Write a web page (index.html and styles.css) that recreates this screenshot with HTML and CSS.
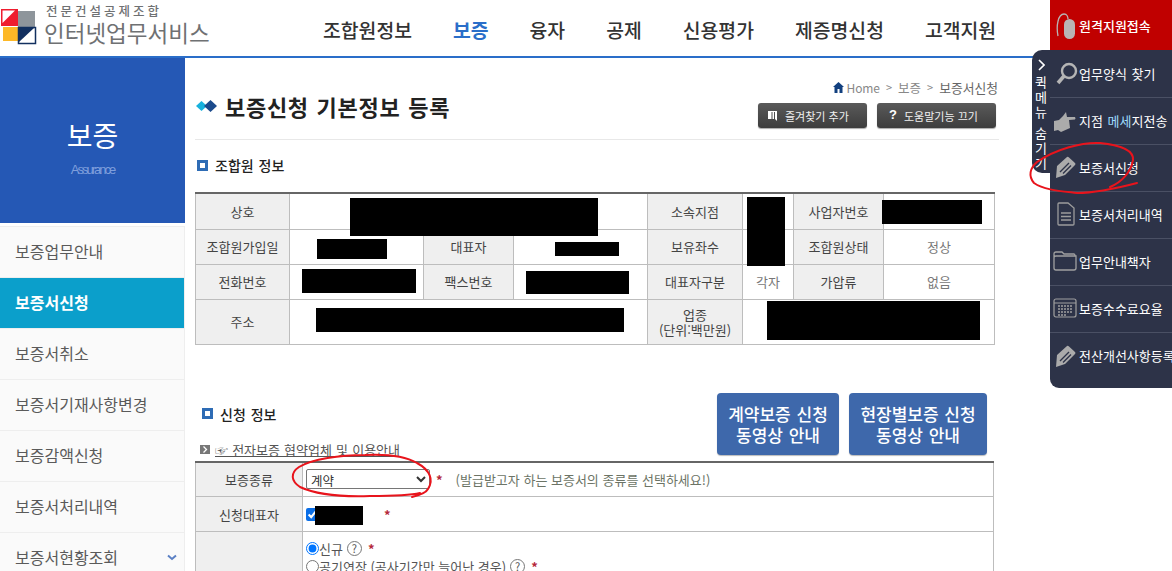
FILE: index.html
```html
<!DOCTYPE html>
<html lang="ko">
<head>
<meta charset="utf-8">
<title>보증신청 기본정보 등록</title>
<link rel="stylesheet" href="styles.css">
</head>
<body>
<div class="page">
  <header class="top">
    <div class="logo">
      <svg class="logo-mark" width="38" height="46" viewBox="0 0 38 46">
        <rect x="18" y="11" width="17" height="16" fill="#8e959b"/>
        <rect x="3" y="27" width="15" height="14" fill="#fdb827"/>
        <rect x="1" y="9" width="17" height="17" fill="#ef1c2e"/>
        <path d="M2.500 10.500 H15 L2.500 23 Z" fill="#fff"/>
        <rect x="18.500" y="27.500" width="17" height="16" fill="#fff" stroke="#12305f" stroke-width="1.500"/>
        <path d="M19 28 H34 L19 42 Z" fill="#12305f"/>
      </svg>
      <div class="logo-text">
        <div class="logo-sub">전문건설공제조합</div>
        <div class="logo-main">인터넷업무서비스</div>
      </div>
    </div>
    <nav class="nav">
      <a>조합원정보</a><a class="on">보증</a><a>융자</a><a>공제</a><a>신용평가</a><a>제증명신청</a><a>고객지원</a>
    </nav>
  </header>

  <div class="body">
    <aside class="side">
      <div class="side-head">
        <div class="side-title">보증</div>
        <div class="side-en">Assurance</div>
      </div>
      <ul class="side-menu">
        <li>보증업무안내</li>
        <li class="active">보증서신청</li>
        <li>보증서취소</li>
        <li>보증서기재사항변경</li>
        <li>보증감액신청</li>
        <li>보증서처리내역</li>
        <li>보증서현황조회<svg class="chev" width="10" height="7" viewBox="0 0 10 7"><path d="M1 1.500 L5 5 L9 1.500" fill="none" stroke="#5b80c4" stroke-width="2"/></svg></li>
      </ul>
    </aside>

    <main class="main">
      <div class="title-row">
        <div class="title">
          <svg width="22" height="12" viewBox="0 0 22 12"><path d="M0 6 L5.500 1 L11 6 L5.500 11 Z" fill="#17b1dd"/><path d="M8 6 L14.500 0 L21 6 L14.500 12 Z" fill="#1b4a8c"/></svg>
          <h1>보증신청 기본정보 등록</h1>
        </div>
        <div class="title-right">
          <div class="crumb">
            <svg width="11" height="11" viewBox="0 0 11 11"><path d="M5.500 0 L11 5 H9.500 V11 H1.500 V5 H0 Z" fill="#12407f"/><rect x="4.500" y="7" width="2" height="4" fill="#fff"/></svg>
            <span class="home">Home</span><i>&gt;</i><span>보증</span><i>&gt;</i><b>보증서신청</b>
          </div>
          <div class="tools">
            <button class="tool tool-a"><svg width="9" height="10" viewBox="0 0 9 10"><path d="M0 0 H9 V10 L7 8 V1 H6 V8 H4.500 V1 H3.500 V8 H0 Z" fill="#fff"/></svg>즐겨찾기 추가</button>
            <button class="tool tool-b"><em>?</em>도움말기능 끄기</button>
          </div>
        </div>
      </div>

      <h2 class="sec"><span class="sq"></span>조합원 정보</h2>

      <table class="info">
        <colgroup><col class="c94"><col class="c134"><col class="c90"><col class="c134"><col class="c95"><col class="c51"><col class="c90"><col class="c111"></colgroup>
        <tr class="r1"><th>상호</th><td colspan="3"></td><th>소속지점</th><td></td><th>사업자번호</th><td></td></tr>
        <tr class="r2"><th>조합원가입일</th><td></td><th>대표자</th><td></td><th>보유좌수</th><td></td><th>조합원상태</th><td>정상</td></tr>
        <tr class="r2"><th>전화번호</th><td></td><th>팩스번호</th><td></td><th>대표자구분</th><td>각자</td><th>가압류</th><td>없음</td></tr>
        <tr class="r4"><th>주소</th><td colspan="3"></td><th>업종<br>(단위:백만원)</th><td colspan="3"></td></tr>
      </table>

      <div class="apply-head">
        <div class="apply-left">
          <h2 class="sec sec2"><span class="sq"></span>신청 정보</h2>
          <div class="guide"><svg width="10" height="9" viewBox="0 0 10 9"><rect width="10" height="9" fill="#777"/><path d="M3.500 1.500 L6.500 4.500 L3.500 7.500" fill="none" stroke="#fff" stroke-width="1.300"/></svg><a>☞ 전자보증 협약업체 및 이용안내</a></div>
        </div>
        <div class="video-btns">
          <button class="vbtn v1">계약보증 신청<br>동영상 안내</button>
          <button class="vbtn v2">현장별보증 신청<br>동영상 안내</button>
        </div>
      </div>

      <table class="form">
        <colgroup><col class="f1"><col></colgroup>
        <tr class="fr"><th>보증종류</th><td><div class="line"><select class="sel"><option>계약</option></select><span class="star s1">*</span><span class="note">(발급받고자 하는 보증서의 종류를 선택하세요!)</span></div></td></tr>
        <tr class="fr"><th>신청대표자</th><td><div class="line"><input type="checkbox" class="chk" checked><span class="star s2">*</span></div></td></tr>
        <tr class="fr3"><th></th><td>
          <label class="radio"><input type="radio" name="k" checked>신규 <span class="q">?</span><span class="star">*</span></label>
          <label class="radio"><input type="radio" name="k">공기연장 (공사기간만 늘어난 경우) <span class="q">?</span><span class="star">*</span></label>
        </td></tr>
      </table>
    </main>
  </div>

  <aside class="quick">
    <div class="remote">
      <svg width="20" height="34" viewBox="0 0 20 34"><path d="M2 28 C0 18 2 6 8 6 C11 6 12 9 12 11" fill="none" stroke="#b9b4b4" stroke-width="1.300"/><rect x="8" y="11" width="11" height="20" rx="5.500" fill="#b9b4b4"/></svg>
      <span>원격지원접속</span>
    </div>
    <div class="panel">
      <button class="tab"><svg width="7" height="12" viewBox="0 0 7 12"><path d="M1 1 L6 6 L1 11" fill="none" stroke="#fff" stroke-width="1.600"/></svg><span>퀵메뉴 숨기기</span></button>
      <a class="qi"><svg width="26" height="28" viewBox="0 0 26 28"><circle cx="16" cy="12" r="7" fill="none" stroke="#b5b5b5" stroke-width="2.400"/><path d="M11 17 L5 24" stroke="#b5b5b5" stroke-width="3.600"/></svg><span>업무양식 찾기</span></a>
      <a class="qi"><svg width="26" height="24" viewBox="0 0 26 24"><path d="M1 13 L6 12 L10 8 L13 4 L14 9 L22 9 Q23 10.500 22 11.500 L16 12 L17 20 L8 24 L5 22 L1 23 Z" fill="#ababab"/></svg><span>지점 <u>메세</u>지전송</span></a>
      <a class="qi"><svg width="26" height="24" viewBox="0 0 24 24"><path d="M2 23 L3 11 L13 2 Q14 1.500 15 2.500 L21 8 Q22 9 21 10 L11 20 Z" fill="#ababab"/><path d="M6 17 L15 8 M9 18.500 L17 10.500" stroke="#2d3348" stroke-width="1.400"/></svg><span>보증서신청</span></a>
      <a class="qi"><svg width="26" height="24" viewBox="-3 0 26 24"><path d="M3 1 H12 L18 6 V22 Q18 23 17 23 H3 Q2 23 2 22 V2 Q2 1 3 1 Z" fill="none" stroke="#9c9c9c" stroke-width="1.300"/><path d="M5 11 H15 M5 14.500 H15 M5 18 H15" stroke="#9c9c9c" stroke-width="1.400"/></svg><span>보증서처리내역</span></a>
      <a class="qi"><svg width="26" height="20" viewBox="0 0 26 20"><path d="M1 3 Q1 1 3 1 H9 L11 3 H21 Q22 3 22 5 M1 3 V17 Q1 19 3 19 H21 Q23 19 23 17 V5 H3 Q1 5 1 7" fill="none" stroke="#a0a0a0" stroke-width="1.300"/></svg><span>업무안내책자</span></a>
      <a class="qi"><svg width="26" height="20" viewBox="0 0 26 20"><rect x="1" y="1" width="22" height="18" rx="2" fill="none" stroke="#a0a0a0" stroke-width="1.200"/><path d="M1 5 H23" stroke="#a0a0a0"/><path d="M5 8 H20 M5 11 H20 M5 14 H20 M5 17 H14" stroke="#a0a0a0" stroke-width="1.500" stroke-dasharray="2 1"/></svg><span>보증수수료요율</span></a>
      <a class="qi"><svg width="26" height="24" viewBox="0 0 24 24"><path d="M2 23 L3 11 L13 2 Q14 1.500 15 2.500 L21 8 Q22 9 21 10 L11 20 Z" fill="#ababab"/><path d="M6 17 L15 8 M9 18.500 L17 10.500" stroke="#2d3348" stroke-width="1.400"/></svg><span>전산개선사항등록</span></a>
    </div>
  </aside>

  <svg class="marks" width="1172" height="571" viewBox="0 0 1172 571">
    <g fill="#000">
      <rect x="350" y="198" width="248" height="38"/>
      <rect x="317" y="239" width="70" height="20"/>
      <rect x="555" y="242" width="64" height="14"/>
      <rect x="302" y="269" width="114" height="24"/>
      <rect x="526" y="271" width="103" height="23"/>
      <rect x="316" y="308" width="308" height="24"/>
      <rect x="747" y="197" width="38" height="69"/>
      <rect x="882" y="200" width="100" height="24"/>
      <rect x="767" y="301" width="213" height="39"/>
      <rect x="315" y="506" width="48" height="19"/>
    </g>
    <g fill="none" stroke="#e8141c" stroke-width="2" stroke-linecap="round">
      <path d="M1110 187 C1122 182 1131 172 1133 160 C1134 150 1120 145 1100 143 C1082 142 1056 149 1037 162 C1030 168 1028 176 1034 183 C1044 190 1060 191 1077 193 C1098 193 1118 188 1137 183"/>
      <path d="M412 497 C420 495 426 493 428 489 C434 480 430 470 417 463 C405 456 385 454 365 455 C340 455 312 459 299 467 C290 473 291 481 300 487 C315 494 340 497 370 496 C395 496 412 495 420 493"/>
    </g>
  </svg>
</div>
</body>
</html>
```
FILE: styles.css
```css
* { box-sizing: border-box; }
html, body { margin: 0; padding: 0; height: 100%; overflow: hidden; background: #fff; }
body { font-family: "Noto Sans CJK KR", "Noto Sans", sans-serif; font-size: 13px; color: #444; }
.page { position: relative; width: 1172px; height: 571px; overflow: hidden; }

/* top bar */
.top { display: flex; height: 58px; border-bottom: 2px solid #2a6ec9; }
.logo { display: flex; width: 323px; }
.logo-mark { flex: none; margin-right: 6px; }
.logo-text { display: flex; flex-direction: column; color: #6f7173; }
.logo-sub { font-size: 12.500px; font-weight: 500; line-height: 12px; margin-top: 5px; padding-left: 2px; letter-spacing: 3px; white-space: nowrap; }
.logo-main { font-size: 22.500px; line-height: 26px; margin-top: 2px; white-space: nowrap; }
.nav { display: flex; gap: 41px; padding-top: 17px; font-size: 19.350px; line-height: 26px; font-weight: 500; color: #333; white-space: nowrap; }
.nav .on { color: #2a6ec9; font-weight: 700; }

/* layout */
.body { display: flex; }
.side { width: 185px; flex: none; }
.side-head { height: 165px; background: #2558b5; color: #fff; text-align: center; padding-top: 58px; }
.side-title { font-size: 28px; line-height: 38px; }
.side-en { font-size: 13px; line-height: 18px; color: #7f9fdc; letter-spacing: -2px; margin-top: 7px; font-family: "Liberation Sans", sans-serif; }
.side-menu { list-style: none; margin: 3px 0 0; padding: 0; border-top: 1px solid #eee; }
.side-menu li { position: relative; height: 51px; line-height: 48px; padding-left: 15px; width: 185px; font-size: 16px; color: #5a5a5a; background: #fafafa; border-bottom: 1px solid #eee; border-right: 1px solid #eee; white-space: nowrap; }
.side-menu li.active { background: #0b9fcb; color: #fff; font-weight: 700; }
.chev { position: absolute; right: 7px; top: 21px; }

.main { width: 804px; margin-left: 10px; }
.title-row { display: flex; justify-content: space-between; height: 82px; border-bottom: 1px solid #e8e8e8; }
.title { display: flex; align-items: center; gap: 7px; height: 100%; padding: 14px 0 0 1px; }
.title h1 { margin: 0; font-size: 22px; line-height: 30px; font-weight: 700; color: #222; word-spacing: 1px; letter-spacing: 0.700px; }
.title-right { display: flex; flex-direction: column; align-items: flex-end; }
.crumb { display: flex; align-items: center; height: 16px; margin-top: 21px; font-size: 12.500px; color: #888; gap: 3px; padding-right: 1px; }
.crumb .home { font-size: 12px; letter-spacing: -0.100px; }
.crumb i { font-style: normal; font-size: 11px; margin: 0 3px; }
.crumb b { font-weight: 400; font-size: 12.800px; color: #666; }
.tools { display: flex; gap: 10px; margin-top: 8px; margin-right: 3px; }
.tool { display: flex; align-items: center; height: 25px; border: 0; border-radius: 3px; padding: 0; background: linear-gradient(#5a5a5a, #3d3d3d); color: #f0f0f0; font: 11px "Noto Sans CJK KR", sans-serif; box-shadow: 0 1px 1px #aaa; }
.tool-a { width: 109px; padding-left: 10px; gap: 8px; }
.tool-b { width: 119px; padding-left: 12px; gap: 7px; }
.tool em { font-style: normal; font-weight: 700; font-size: 13px; color: #fff; font-family: "Liberation Sans", sans-serif; margin-top: -3px; }

.sec { display: flex; align-items: center; margin: 0; font-size: 14px; line-height: 20px; font-weight: 500; color: #222; word-spacing: 1px; }
.sq { width: 11px; height: 11px; border: 3px solid #2e6cb5; background: #fff; margin-right: 7px; margin-left: 2px; }
.title-row + .sec { margin-top: 15px; }

table { border-collapse: collapse; table-layout: fixed; width: 799px; }
th { background: #efefef; font-weight: 400; color: #444; }
th, td { border: 1px solid #bdbdbd; padding: 0; text-align: center; }
.info { margin-top: 17px; border-top: 2px solid #666; }
.info td { color: #777; }
.c94 { width: 94px; } .c134 { width: 134px; } .c90 { width: 90px; } .c95 { width: 95px; } .c51 { width: 51px; } .c111 { width: 111px; }
.info th { line-height: 15px; }
.r1 { height: 36px; } .r2 { height: 35px; } .r4 { height: 45px; }

.apply-head { display: flex; justify-content: space-between; height: 116px; width: 800px; padding-top: 48px; }
.apply-left { width: 400px; }
.sec2 { margin-left: 5px; margin-top: 11px; }
.guide { display: flex; align-items: center; gap: 5px; margin-top: 17px; margin-left: 5px; font-size: 13px; color: #555; line-height: 18px; white-space: nowrap; }
.guide a { text-decoration: underline; word-spacing: 0.500px; }
.video-btns { display: flex; gap: 10px; margin-right: 8px; }
.vbtn { height: 62px; border: 0; border-radius: 4px; background: #3e68ab; color: #fff; font: 500 17px/21px "Noto Sans CJK KR", sans-serif; box-shadow: 0 1px 1px #bbb; padding: 0; word-spacing: 1px; }
.v1 { width: 122px; } .v2 { width: 138px; }

.form { border-top: 2px solid #666; }
.f1 { width: 107px; }
.fr { height: 35px; } .fr3 { height: 60px; }
.form td { text-align: left; vertical-align: top; padding-left: 3px; }
.fr td { vertical-align: middle; }
.line { display: flex; align-items: center; }
.sel { width: 124px; height: 20px; font: 12.500px "Noto Sans CJK KR", sans-serif; color: #333; background: #fff; border: 1px solid #767676; border-radius: 2px; padding: 0; }
.star { color: #b52a3a; font-size: 13px; font-weight: 700; margin-left: 6px; }
.note { margin-left: 13px; font-size: 13px; color: #6c7466; white-space: nowrap; }
.chk { width: 13px; height: 13px; margin: 0; accent-color: #0a6fe8; }
.s2 { margin-left: 65px; }
.radio { display: flex; align-items: center; height: 18px; white-space: nowrap; color: #555; }
.radio:first-child { margin-top: 7px; }
.radio input { margin: 0; width: 13px; height: 13px; }
.q { display: inline-flex; justify-content: center; align-items: center; width: 15px; height: 15px; margin-left: 4px; border: 1px solid #777; border-radius: 50%; font-size: 11px; color: #555; }

/* quick menu */
.quick { position: absolute; top: 0; right: 0; width: 122px; }
.remote { display: flex; align-items: center; height: 50px; padding-left: 6px; gap: 3px; background: #c00000; color: #fff; font-size: 13px; font-weight: 500; }
.panel { position: relative; height: 338px; padding-top: 1px; background: #2d3348; border-bottom-left-radius: 9px; }
.tab { position: absolute; left: -18px; top: 0; width: 18px; height: 123px; border: 0; padding: 9px 0 0; background: #2d3348; border-radius: 10px 0 0 10px; color: #fff; display: flex; flex-direction: column; align-items: center; font: 13px/15px "Noto Sans CJK KR", sans-serif; overflow: hidden; }
.tab svg { flex: none; }
.tab span { flex: none; writing-mode: vertical-rl; text-orientation: upright; margin-top: 5px; letter-spacing: 2px; word-spacing: -9px; white-space: nowrap; }
.qi { display: flex; align-items: center; height: 47px; padding: 0 0 2px 3px; border-bottom: 1px solid #4a5064; color: #fff; font-size: 13px; white-space: nowrap; word-spacing: 1px; }
.qi svg { flex: none; width: 26px; }
.qi:last-child { border-bottom: 0; }
.qi u { text-decoration: none; color: #9fdcff; }

.marks { position: absolute; left: 0; top: 0; pointer-events: none; }
```
